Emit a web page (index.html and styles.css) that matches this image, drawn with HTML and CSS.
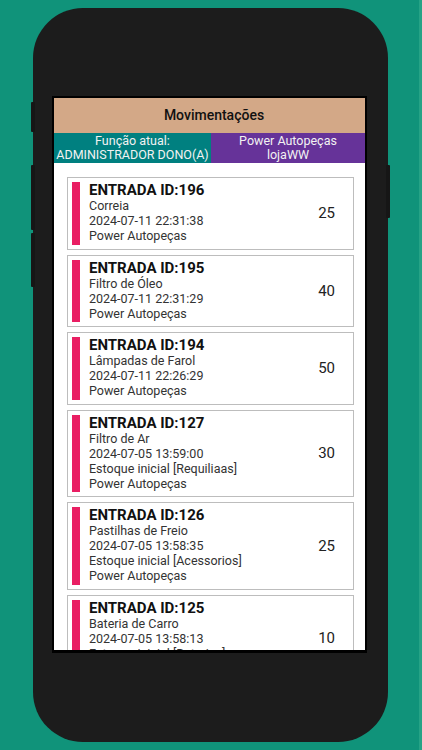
FILE: index.html
```html
<!DOCTYPE html>
<html>
<head>
  <title>Movimentações</title>
  <meta name="viewport" content="width=device-width, initial-scale=1.0">
  <link rel="stylesheet" href="styles.css">
</head>
<body>
  <div class="phone">
    <span class="key key-mute"></span>
    <span class="key key-up"></span>
    <span class="key key-down"></span>
    <span class="key key-power"></span>

    <div class="screen">
      <div class="header">Movimentações</div>

      <div class="band">
        <div class="role">Função atual:<br>ADMINISTRADOR DONO(A)</div>
        <div class="store">Power Autopeças<br>lojaWW</div>
      </div>

      <ul class="list">
        <li class="card">
          <div class="bar"></div>
          <div class="info">
            <div class="title">ENTRADA ID:196</div>
            <div class="line">Correia</div>
            <div class="line">2024-07-11 22:31:38</div>
            <div class="line">Power Autopeças</div>
          </div>
          <div class="qty">25</div>
        </li>
        <li class="card">
          <div class="bar"></div>
          <div class="info">
            <div class="title">ENTRADA ID:195</div>
            <div class="line">Filtro de Óleo</div>
            <div class="line">2024-07-11 22:31:29</div>
            <div class="line">Power Autopeças</div>
          </div>
          <div class="qty">40</div>
        </li>
        <li class="card">
          <div class="bar"></div>
          <div class="info">
            <div class="title">ENTRADA ID:194</div>
            <div class="line">Lâmpadas de Farol</div>
            <div class="line">2024-07-11 22:26:29</div>
            <div class="line">Power Autopeças</div>
          </div>
          <div class="qty">50</div>
        </li>
        <li class="card">
          <div class="bar"></div>
          <div class="info">
            <div class="title">ENTRADA ID:127</div>
            <div class="line">Filtro de Ar</div>
            <div class="line">2024-07-05 13:59:00</div>
            <div class="line">Estoque inicial [Requiliaas]</div>
            <div class="line">Power Autopeças</div>
          </div>
          <div class="qty">30</div>
        </li>
        <li class="card">
          <div class="bar"></div>
          <div class="info">
            <div class="title">ENTRADA ID:126</div>
            <div class="line">Pastilhas de Freio</div>
            <div class="line">2024-07-05 13:58:35</div>
            <div class="line">Estoque inicial [Acessorios]</div>
            <div class="line">Power Autopeças</div>
          </div>
          <div class="qty">25</div>
        </li>
        <li class="card">
          <div class="bar"></div>
          <div class="info">
            <div class="title">ENTRADA ID:125</div>
            <div class="line">Bateria de Carro</div>
            <div class="line">2024-07-05 13:58:13</div>
            <div class="line">Estoque inicial [Baterias]</div>
            <div class="line">Power Autopeças</div>
          </div>
          <div class="qty">10</div>
        </li>
      </ul>
    </div>
  </div>
</body>
</html>
```

FILE: styles.css
```css
body {
  margin: 0;
  width: 422px;
  height: 750px;
  overflow: hidden;
  background-color: #10937a;
  box-shadow: inset -3px 0 0 #26a386;
  font-family: Roboto, "Noto Sans", sans-serif;
}

.phone {
  position: relative;
  margin: 8px 0 0 33px;
  width: 355px;
  height: 734px;
  padding: 88px 0 0 19px;
  box-sizing: border-box;
  background-color: #1c1c1c;
  border-radius: 50px;
}

.key {
  position: absolute;
  width: 4px;
  background-color: #161616;
  border-radius: 1px;
}

.key-mute {
  left: -2px;
  top: 94px;
  height: 30px;
}

.key-up {
  left: -2px;
  top: 157px;
  height: 65px;
}

.key-down {
  left: -2px;
  top: 225px;
  height: 54px;
}

.key-power {
  right: -2px;
  top: 157px;
  height: 53px;
}

.screen {
  width: 315px;
  height: 557px;
  box-sizing: border-box;
  border: 2px solid #000;
  border-bottom-width: 3px;
  background-color: #fff;
  overflow: hidden;
}

.header {
  height: 35px;
  line-height: 35px;
  padding-left: 9px;
  text-align: center;
  background-color: #d3a887;
  color: #111;
  font-size: 14px;
  font-weight: 500;
}

.band {
  display: grid;
  grid-template-columns: 157px 1fr;
  height: 30px;
  color: #f2f2f2;
  font-size: 12.5px;
  line-height: 14.3px;
  text-align: center;
}

.role,
.store {
  padding-top: 1px;
  white-space: nowrap;
}

.role {
  background-color: #008080;
}

.store {
  background-color: #663399;
}

.list {
  list-style: none;
  margin: 0;
  padding: 14px 11px 0 13px;
  display: flex;
  flex-direction: column;
  gap: 5px;
}

.card {
  display: flex;
  align-items: center;
  padding: 4px 18px 4px 4px;
  border: 1px solid #bdbdbd;
}

.bar {
  width: 8px;
  align-self: stretch;
  background-color: #e91e63;
}

.info {
  flex: 1;
  padding: 0 0 1.5px 9px;
}

.title {
  font-size: 15px;
  font-weight: bold;
  line-height: 16px;
  color: #111;
}

.line {
  font-size: 12.5px;
  line-height: 15px;
  color: #333;
}

.qty {
  font-size: 15px;
  color: #222;
}
```
